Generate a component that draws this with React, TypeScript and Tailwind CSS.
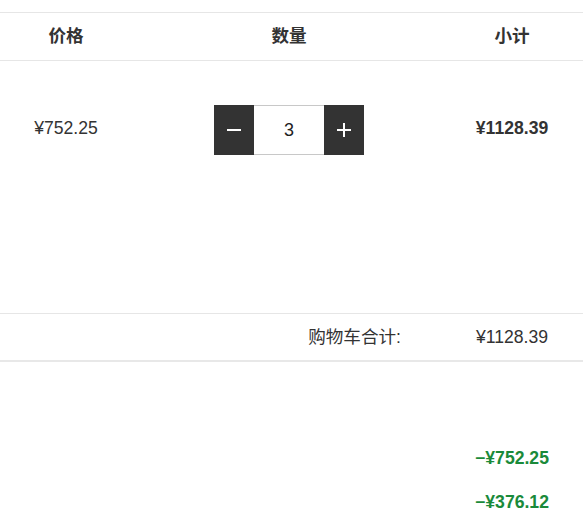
import { useState } from 'react';

const price = 752.25;

export default function App() {
  const [qty, setQty] = useState(3);
  const subtotal = 1128.39;

  return (
    <div
      className="w-[583px] h-[531px] bg-white text-[#333] text-[17.6px] overflow-hidden"
      style={{ fontFamily: '"Liberation Sans", Arial, "Noto Sans CJK SC", sans-serif' }}
    >
      <div className="h-[12px]" />
      {/* header */}
      <div className="grid grid-cols-[132px_314px_132px] h-[49px] border-t border-b border-[#e6e6e6] items-center font-bold">
        <div className="text-center">价格</div>
        <div className="text-center">数量</div>
        <div className="text-center">小计</div>
      </div>

      {/* item row */}
      <div className="grid grid-cols-[132px_314px_132px] h-[253px] pt-[44px] items-start border-b border-[#e6e6e6]">
        <div className="h-[50px] flex items-center justify-center pb-[3px]">¥{price.toFixed(2)}</div>
        <div className="flex justify-center">
          <div className="flex h-[50px]">
            <button
              className="w-[40px] h-[50px] bg-[#333] flex items-center justify-center"
              onClick={() => setQty(Math.max(1, qty - 1))}
            >
              <span className="block w-[14px] h-[2px] bg-white" />
            </button>
            <div className="w-[70px] h-[50px] border-t border-b border-[#c8c8c8] flex items-center justify-center text-[18px] text-[#222]">
              {qty}
            </div>
            <button
              className="w-[40px] h-[50px] bg-[#333] flex items-center justify-center relative"
              onClick={() => setQty(qty + 1)}
            >
              <span className="block w-[14px] h-[2px] bg-white" />
              <span className="absolute w-[2px] h-[14px] bg-white" />
            </button>
          </div>
        </div>
        <div className="h-[50px] flex items-center justify-center pb-[3px] font-bold">¥{subtotal.toFixed(2)}</div>
      </div>

      {/* cart total */}
      <div className="grid grid-cols-[446px_132px] h-[48px] items-center border-b-2 border-[#e8e8e8]">
        <div className="text-right pr-[45px]">购物车合计:</div>
        <div className="text-center">¥{subtotal.toFixed(2)}</div>
      </div>

      <div className="grid grid-cols-[446px_132px] pt-[83px]">
        <div />
        <div className="flex flex-col items-center gap-[18px] font-bold text-[#1a8a3a]">
          <div>−¥752.25</div>
          <div>−¥376.12</div>
        </div>
      </div>
    </div>
  );
}
